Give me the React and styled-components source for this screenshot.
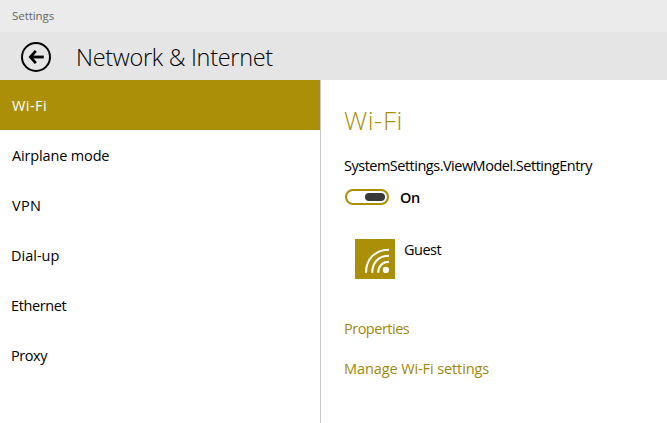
import React from 'react'
import styled, { createGlobalStyle } from 'styled-components'

const navItems = [
    { label: 'Wi-Fi', indent: 12, spacing: 0.45 },
    { label: 'Airplane mode', indent: 12, spacing: -0.15 },
    { label: 'VPN', indent: 12, spacing: 0.3 },
    { label: 'Dial-up', indent: 11, spacing: 0 },
    { label: 'Ethernet', indent: 11, spacing: -0.4 },
    { label: 'Proxy', indent: 11, spacing: -0.45 },
]

const BackIcon = () => (
    <svg width="32" height="32" viewBox="0 0 32 32" fill="none" stroke="#000">
        <circle cx="16" cy="16" r="14" strokeWidth="2" />
        <path d="M23.8 16H10.5" strokeWidth="2.8" />
        <path d="M15.8 9.8L10.4 16L15.8 22.2" strokeWidth="2.8" />
    </svg>
)

const SignalIcon = () => (
    <svg width="40" height="40" viewBox="0 0 40 40" fill="none" stroke="#fff" strokeWidth="2.1">
        <path d="M11 33.8C11 20 20 10.8 34 10.8" />
        <path d="M17.2 33.8C17.2 23.5 23.5 16.8 34 16.8" />
        <path d="M23.2 33.8C23.2 27 27.5 22.8 34 22.8" />
        <circle cx="30.9" cy="30.9" r="3.1" fill="#fff" stroke="none" />
    </svg>
)

const App = () => {
    return (
        <Container>
            <GlobalStyle />
            <TitleBar>Settings</TitleBar>
            <Header>
                <BackButton aria-label="Back">
                    <BackIcon />
                </BackButton>
                <Heading>Network &amp; Internet</Heading>
            </Header>
            <Body>
                <Sidebar>
                    {navItems.map((item, i) => (
                        <NavItem key={item.label} $active={i === 0} $indent={item.indent} $spacing={item.spacing}>
                            {item.label}
                        </NavItem>
                    ))}
                </Sidebar>
                <Content>
                    <Title>Wi-Fi</Title>
                    <Label>SystemSettings.ViewModel.SettingEntry</Label>
                    <ToggleRow>
                        <Toggle role="switch" aria-checked="true">
                            <Thumb />
                        </Toggle>
                        <ToggleText>On</ToggleText>
                    </ToggleRow>
                    <Network>
                        <Tile>
                            <SignalIcon />
                        </Tile>
                        <NetworkName>Guest</NetworkName>
                    </Network>
                    <Link $spacing={-0.5}>Properties</Link>
                    <Link $spacing={-0.1}>Manage Wi-Fi settings</Link>
                </Content>
            </Body>
        </Container>
    )
}

export default App

const GlobalStyle = createGlobalStyle`
* {
    box-sizing: border-box;
}

body {
    margin: 0;
    background: #fff;
    font-family: "Open Sans", "Noto Sans", sans-serif;
    font-size: 14.5px;
    color: #000;
    overflow: hidden;
}
`;

const Container = styled.div`
width: 100%;
height: 100vh;
display: flex;
flex-direction: column;
`;

const TitleBar = styled.div`
height: 32px;
padding-left: 12px;
background: #ebebeb;
color: #666;
font-size: 11.5px;
line-height: 32px;
letter-spacing: -0.05px;
`;

const Header = styled.header`
height: 48px;
display: flex;
align-items: center;
padding-left: 20px;
background: #e5e5e5;
`;

const BackButton = styled.button`
width: 32px;
height: 32px;
margin-top: 2px;
padding: 0;
border: none;
background: none;
cursor: pointer;

svg {
    display: block;
}
`;

const Heading = styled.h1`
margin: 2px 0 0 24px;
font-size: 23.5px;
font-weight: 360;
line-height: 32px;
letter-spacing: -0.3px;
white-space: nowrap;
`;

const Body = styled.div`
flex: 1;
display: flex;
`;

const Sidebar = styled.nav`
width: 321px;
border-right: 1px solid #c8c8c8;
`;

const NavItem = styled.div`
height: 50px;
padding-left: ${({ $indent }) => $indent}px;
line-height: 51px;
letter-spacing: ${({ $spacing }) => $spacing}px;
background: ${({ $active }) => ($active ? '#ab8f09' : 'transparent')};
color: ${({ $active }) => ($active ? '#fff' : '#000')};
cursor: pointer;
`;

const Content = styled.main`
flex: 1;
padding: 22px 0 0 23px;
`;

const Title = styled.h2`
margin: 0;
height: 40px;
font-size: 26px;
font-weight: 350;
line-height: 36px;
letter-spacing: 0.5px;
color: #ab8f09;
`;

const Label = styled.div`
height: 46px;
line-height: 48px;
letter-spacing: -0.5px;
white-space: nowrap;
`;

const ToggleRow = styled.div`
height: 18px;
display: flex;
align-items: center;
padding-left: 1px;
`;

const Toggle = styled.div`
width: 44px;
height: 16px;
display: flex;
align-items: center;
justify-content: flex-end;
padding-right: 2px;
border: 2px solid #ab8f09;
border-radius: 8px;
`;

const Thumb = styled.div`
width: 20px;
height: 8px;
border-radius: 4px;
background: #3a3a3a;
`;

const ToggleText = styled.span`
margin-left: 11px;
font-weight: 600;
letter-spacing: -0.5px;
`;

const Network = styled.div`
display: flex;
margin: 33px 0 30px 11px;
`;

const Tile = styled.div`
width: 40px;
height: 40px;
background: #ab8f09;
`;

const NetworkName = styled.span`
margin-left: 9px;
line-height: 22px;
letter-spacing: -0.5px;
`;

const Link = styled.a`
display: block;
height: 40px;
line-height: 40px;
letter-spacing: ${({ $spacing }) => $spacing}px;
color: #a1880a;
cursor: pointer;
`;
